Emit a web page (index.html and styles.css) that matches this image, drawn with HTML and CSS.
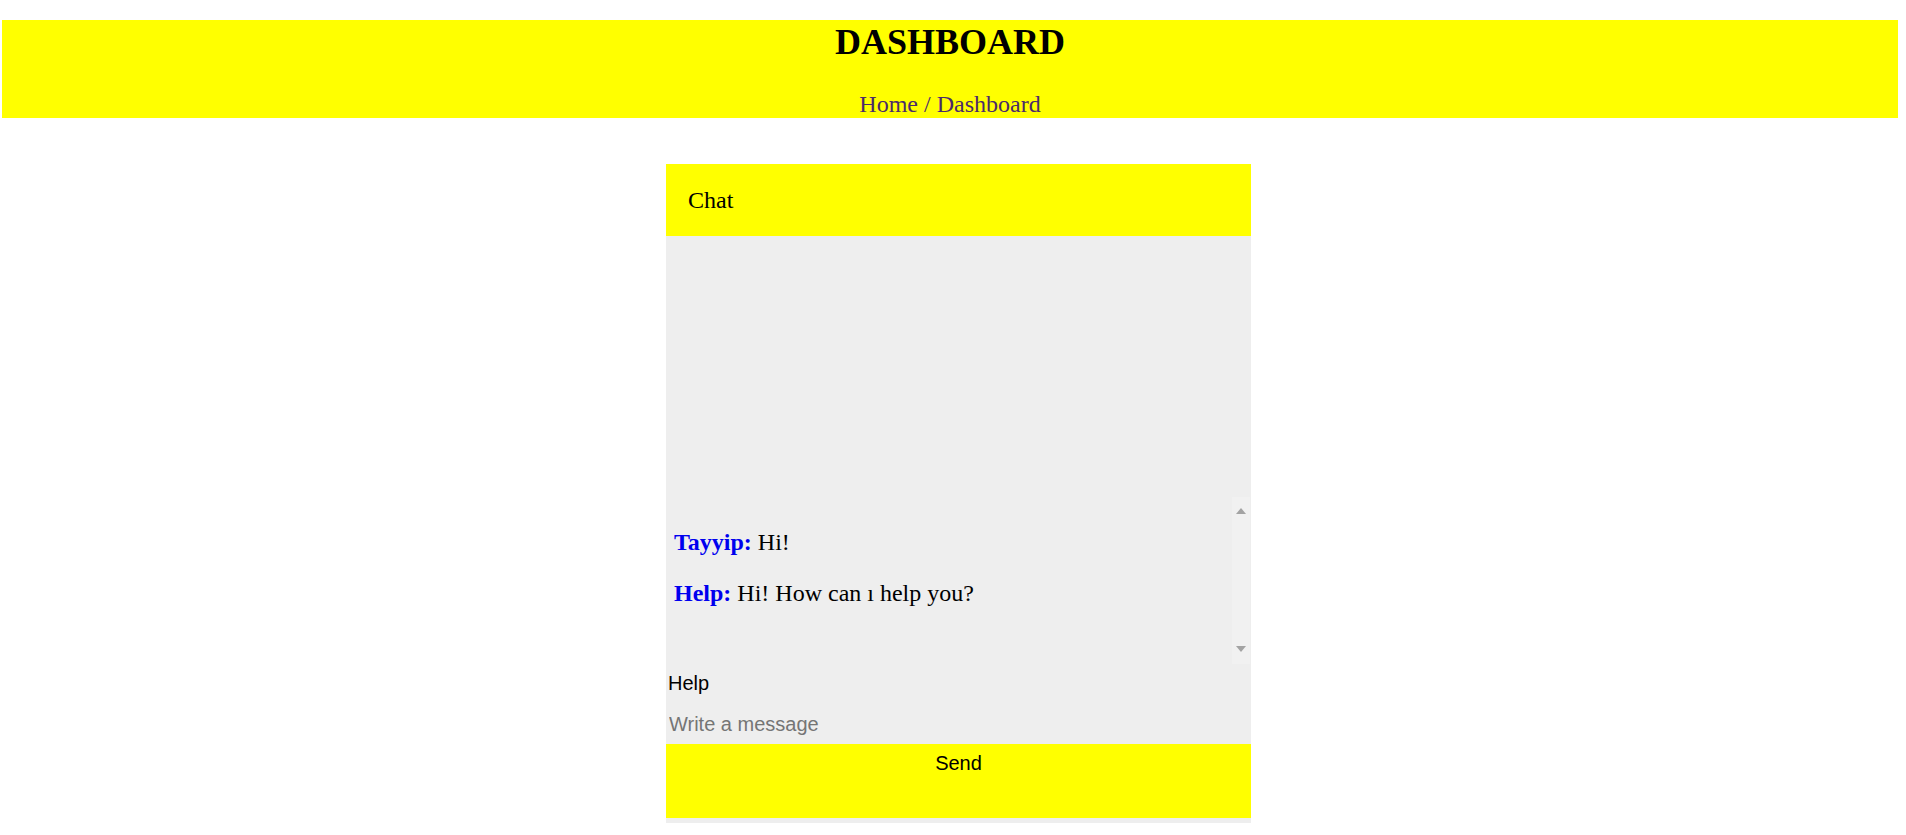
FILE: index.html
```html
<!DOCTYPE html>
<html lang="en">
<head>
<meta charset="utf-8">
<title>Dashboard</title>
<link rel="stylesheet" href="styles.css">
</head>
<body>
<header class="page-header">
  <h1 class="page-title">DASHBOARD</h1>
  <p class="breadcrumb">Home / Dashboard</p>
</header>
<main class="main">
  <section class="chat">
    <div class="chat-head">Chat</div>
    <div class="chat-body">
      <div class="thread">
        <div class="messages">
          <p class="msg"><b class="who">Tayyip:</b> Hi!</p>
          <p class="msg"><b class="who">Help:</b> Hi! How can ı help you?</p>
        </div>
        <div class="scrollbar" aria-hidden="true">
          <span class="arrow arrow-up"></span>
          <span class="arrow arrow-down"></span>
        </div>
      </div>
    </div>
    <form class="chat-form">
      <label class="chat-label" for="msg">Help</label>
      <input class="chat-input" id="msg" type="text" placeholder="Write a message">
      <button class="chat-send" type="button">Send</button>
    </form>
  </section>
</main>
</body>
</html>
```
FILE: styles.css
```css
html, body {
  margin: 0;
  padding: 0;
  background: #ffffff;
}
body {
  font-family: "Liberation Serif", "Times New Roman", serif;
  color: #000;
}
.page-header {
  margin: 20px 8px 0 2px;
  padding-top: 4px;
  background: #ffff00;
  text-align: center;
}
.page-title {
  margin: 0;
  font-size: 36px;
  line-height: 36px;
  font-weight: bold;
}
.breadcrumb {
  margin: 31px 0 0;
  font-size: 24px;
  line-height: 27px;
  color: #4b2a6b;
}
.main {
  display: flex;
  padding-left: 666px;
  padding-top: 46px;
}
.chat {
  width: 585px;
  background: #eeeeee;
  padding-bottom: 5px;
}
.chat-head {
  height: 72px;
  background: #ffff00;
  display: flex;
  align-items: center;
  padding: 0 22px;
  font-size: 24px;
}
.chat-body {
  height: 428px;
  display: flex;
  flex-direction: column;
  justify-content: flex-end;
}
.thread {
  display: flex;
  height: 167px;
}
.messages {
  flex: 1;
  box-sizing: border-box;
  padding: 31px 8px 0;
  overflow: hidden;
}
.scrollbar {
  width: 18px;
  margin-right: 1px;
  background: #f1f1f1;
  display: flex;
  flex-direction: column;
  justify-content: space-between;
  align-items: center;
  padding: 11px 0 12px;
  box-sizing: border-box;
}
.arrow {
  width: 0;
  height: 0;
  border-left: 5px solid transparent;
  border-right: 5px solid transparent;
}
.arrow-up {
  border-bottom: 6px solid #a3a3a3;
}
.arrow-down {
  border-top: 6px solid #a3a3a3;
}
.msg {
  margin: 0 0 23px;
  font-size: 24px;
  line-height: 28px;
}
.who {
  color: #0000ee;
}
.chat-form {
  display: flex;
  flex-direction: column;
  font-family: "Liberation Sans", Arial, sans-serif;
}
.chat-label {
  margin-top: 8px;
  padding-left: 2px;
  font-size: 20px;
  line-height: 23px;
}
.chat-input {
  height: 49px;
  box-sizing: border-box;
  margin: 0;
  padding: 18px 3px 8px;
  border: none;
  background: transparent;
  font-family: "Liberation Sans", Arial, sans-serif;
  font-size: 20px;
  line-height: 23px;
  outline: none;
}
.chat-input::placeholder {
  color: #757575;
}
.chat-send {
  margin: 0;
  border: none;
  background: #ffff00;
  padding: 8px 0 43px;
  font-family: "Liberation Sans", Arial, sans-serif;
  font-size: 20px;
  line-height: 23px;
  color: #000;
}
```
